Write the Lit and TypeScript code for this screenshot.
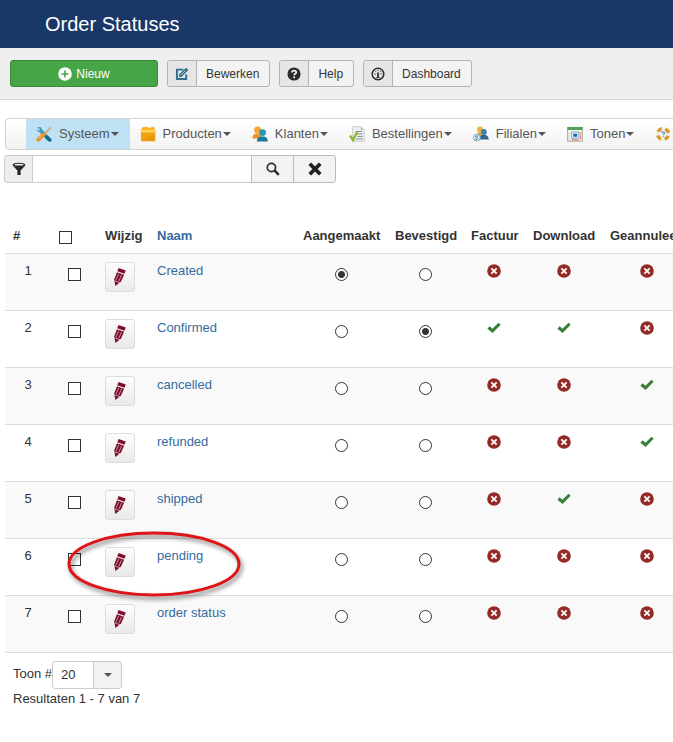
import { LitElement, html, svg, css, nothing } from "lit";
import { customElement, state } from "lit/decorators.js";

const glyph = (body: unknown, cls = "", box = "0 0 16 16") =>
  html`<svg class="icon ${cls}" viewBox=${box} aria-hidden="true">${body}</svg>`;

const plusCircle = svg`<circle cx="8" cy="8" r="7.8" fill="#fff"/><path d="M8 4v8M4 8h8" stroke="#46a546" stroke-width="1.8"/>`;
const editIcon = svg`<path d="M9.5 3H2.2v10.8h10.6V8.5" fill="none" stroke="#2f6f8f" stroke-width="2.2"/><path d="M5 8.4L12.6.8l2.7 2.7-7.6 7.6-3.4.7z" fill="#2f6f8f"/><path d="M6.4 9.6l5.4-5.4" stroke="#e6e6e6" stroke-width=".8"/>`;
const helpIcon = svg`<circle cx="8" cy="8" r="7.5" fill="#2b2b2b"/><path d="M5.6 6.3C5.6 3.4 10.6 3.3 10.6 6c0 1.8-2.4 1.7-2.4 3.4" fill="none" stroke="#eee" stroke-width="2"/><circle cx="8.2" cy="11.8" r="1.2" fill="#eee"/>`;
const dashIcon = svg`<circle cx="8" cy="8" r="6.6" fill="none" stroke="#2b2b2b" stroke-width="1.7"/><path d="M8 6.2v6" stroke="#2b2b2b" stroke-width="2"/><path d="M3.8 8h1.6M10.6 8h1.6M5 4.8l1 1M11 4.8l-1 1M8 3.2v1.4M6 12h4" stroke="#2b2b2b" stroke-width="1"/>`;
const filterIcon = svg`<ellipse cx="8" cy="3.4" rx="7.2" ry="2.6" fill="#222"/><ellipse cx="8" cy="3" rx="5.2" ry="1" fill="#eee"/><path d="M1 4.4l5.2 5.4v5h3.6v-5L15 4.4q-7 3.2-14 0z" fill="#222"/>`;
const searchIcon = svg`<circle cx="6.2" cy="6.2" r="4.7" fill="none" stroke="#2b2b2b" stroke-width="2"/><path d="M9.6 9.6l5 5" stroke="#2b2b2b" stroke-width="2.8"/>`;
const clearIcon = svg`<path d="M2 2l12 12M14 2L2 14" stroke="#222" stroke-width="4.4"/>`;
const cancelIcon = svg`<circle cx="8" cy="8" r="7.8" fill="#942a25"/><path d="M5 5l6 6M11 5l-6 6" stroke="#fff" stroke-width="2.1"/>`;
const okIcon = svg`<path d="M.4 8.8L3 6l3.2 2.8L13.2 2l2.4 2.4-9.2 9.2z" fill="#378137"/>`;
const pencilIcon = svg`<path d="M8.4 0l8 2.8-1.4 3.6L7 3.6z" fill="#7b0f2b"/><path d="M6.6 4.6l8 2.8-3.6 8L4.8 20 3.6 12.6z" fill="#7b0f2b"/><path d="M8.6 6.4l-3.1 7M11.8 7.6l-3.1 7" stroke="#dcc4ca" stroke-width=".8"/><path d="M4 14.2l6 2.2" stroke="#eee" stroke-width=".7"/>`;

const toolsIcon = svg`<path d="M2 1l3 .2 1.2 2.4L14 12l1.4 2-2 1.6-2.2-1.2L3.6 6.2 1 5z" fill="#3d9cc0"/><path d="M1.4 2.4l2.2 1.8" stroke="#bfe3f3" stroke-width="1.6"/><path d="M10.8 11l3 3" stroke="#17698c" stroke-width="3.4" stroke-linecap="round"/><path d="M14.8 1.4l-7 7.4" stroke="#c9aa75" stroke-width="1.8"/><path d="M7.6 8.4L2.4 13.6" stroke="#ef8b24" stroke-width="3.8" stroke-linecap="round"/><path d="M6.8 8.4L2.2 13" stroke="#fbc36c" stroke-width="1"/>`;
const boxIcon = svg`<path d="M1 4l1.8-3 5 0 1 1L14 .6 15 4z" fill="#f8b41e"/><path d="M.8 4.4h14.6v10.8H1z" fill="#f2a312"/><path d="M.8 4h14.6v2.4H.8z" fill="#ffd65b"/><path d="M2 14l12-6v7H2z" fill="#e98d08" opacity=".6"/>`;
const peopleIcon = svg`<circle cx="5.6" cy="4" r="3.6" fill="#f6a830"/><path d="M.4 12.4q0-4.6 4-5h2.4q2.4.6 2.6 5z" fill="#ee9420"/><circle cx="10.6" cy="6.6" r="3.4" fill="#2b95b5"/><path d="M4.8 15.6q0-4.6 4-5.2h3.6q3.4.8 3.4 5.2z" fill="#1a7c9c"/>`;
const orderIcon = svg`<path d="M3.4.6h8.4l3.6 3.4v11.4h-12z" fill="#eceef0" stroke="#c1c6ca" stroke-width=".8"/><path d="M11.6.8V4h3.6z" fill="#b9c0c5"/><path d="M7 5.5h6M7.6 8h6M8.4 10.5h5M7 13h7" stroke="#8b949b" stroke-width="1"/><path d="M.8 9.4l3.2 4.8L8.2 5.6" fill="none" stroke="#8fbc2c" stroke-width="2.4"/>`;
const affiliateIcon = svg`<circle cx="7" cy="3.4" r="3" fill="#edb33d"/><path d="M3.8 10q.4-3.6 3.2-4l3 4z" fill="#e2a12c"/><circle cx="10.8" cy="6" r="3" fill="#3f7fae"/><path d="M6 13.6q.4-4.4 4-4.8h2q3.4.8 3.8 4.8z" fill="#2c6796"/><circle cx="3.8" cy="11.6" r="3.4" fill="#eaf4fa" stroke="#74a7c7"/><path d="M5 10.2q-2.2-.8-2.4.4t1.6 1q1.2.8 0 1.6t-1.8-.2" fill="none" stroke="#2d6688" stroke-width=".9"/>`;
const displayIcon = svg`<path d="M.6 1.4h14.8v13.8H.6z" fill="#f4f1ee" stroke="#a9a9a9"/><path d="M.4 1h15.2v3H.4z" fill="#55a05c"/><path d="M2 6v8" stroke="#ddd" stroke-width="1.2"/><path d="M4.6 6h7.2v6.2H4.6z" fill="#fff" stroke="#74a3cc"/><path d="M6.2 7.6h4v3.2h-4z" fill="#1b69b0"/><path d="M13.6 6v3.4" stroke="#e7a94c" stroke-width="1.4"/><path d="M13.6 9.8v3.8M4.6 13.8h7" stroke="#e08080" stroke-width="1.2"/>`;
const lifebuoyIcon = svg`<circle cx="8" cy="8" r="5.4" fill="none" stroke="#f1ece0" stroke-width="3.4"/><circle cx="8" cy="8" r="5.4" fill="none" stroke="#d99a2e" stroke-width="3.6" stroke-dasharray="4.6 3.88" stroke-dashoffset="-1.9"/><path d="M6.6 6.8q1.4-1.6 2.6-.4t-1 2v.8" fill="none" stroke="#4b8ec0" stroke-width="1.1"/><circle cx="8.2" cy="10.6" r=".6" fill="#4b8ec0"/>`;

interface Status {
  name: string;
  flags: [boolean, boolean, boolean];
  marked?: boolean;
}

const STATUSES: Status[] = [
  { name: "Created", flags: [false, false, false] },
  { name: "Confirmed", flags: [true, true, false] },
  { name: "cancelled", flags: [false, false, true] },
  { name: "refunded", flags: [false, false, true] },
  { name: "shipped", flags: [false, true, false] },
  { name: "pending", flags: [false, false, false], marked: true },
  { name: "order status", flags: [false, false, false] },
];

const MENU = [
  { label: "Systeem", icon: toolsIcon, active: true },
  { label: "Producten", icon: boxIcon },
  { label: "Klanten", icon: peopleIcon },
  { label: "Bestellingen", icon: orderIcon },
  { label: "Filialen", icon: affiliateIcon },
  { label: "Tonen", icon: displayIcon },
];

const FLAG_NAMES = ["Factuur", "Download", "Geannuleerd"];

@customElement("app-root")
export class AppRoot extends LitElement {
  @state() private created = 0;
  @state() private confirmed = 1;

  static styles = css`
    :host {
      display: block;
      overflow-x: hidden;
      background: #fff;
      color: #333;
      font: 13px/18px "Liberation Sans", Arial, sans-serif;
    }
    * { box-sizing: border-box; }
    a { color: #376b9e; text-decoration: none; }
    button, input, select { font: inherit; color: inherit; margin: 0; }
    button { cursor: pointer; padding: 0; }
    .icon { display: block; flex: none; width: 16px; height: 16px; }
    .small { width: 14px; height: 14px; }
    .title-bar { background: #1a3867; padding: 0 45px; }
    h1 { margin: 0; color: #fff; font-size: 20px; font-weight: 400; line-height: 48px; }
    .toolbar {
      display: flex;
      gap: 9px;
      padding: 12px 10px;
      background: #efefef;
      border-bottom: 1px solid #d8d8d8;
      font-size: 12px;
    }
    .tool {
      display: flex;
      align-items: stretch;
      height: 27px;
      border: 1px solid #b3b3b3;
      border-radius: 3px;
      background: #f3f3f3;
      overflow: hidden;
    }
    .tool-icon {
      display: flex;
      align-items: center;
      justify-content: center;
      width: 29px;
      background: #e6e6e6;
      border-right: 1px solid #b3b3b3;
    }
    .tool-label { align-self: center; padding: 0 10px 0 9px; }
    .new {
      width: 148px;
      align-items: center;
      justify-content: center;
      gap: 4px;
      background: #46a546;
      border-color: #3a873a;
      color: #fff;
    }
    .menu {
      display: flex;
      height: 32px;
      margin: 18px 0 0 5px;
      padding-left: 20px;
      border: 1px solid #d4d4d4;
      border-right: 0;
      border-radius: 4px 0 0 4px;
      background: linear-gradient(#fff, #f2f2f2);
    }
    .menu a {
      display: flex;
      align-items: center;
      flex: none;
      padding: 0 11px 0 10px;
      color: #555;
    }
    .menu .icon { margin-right: 7px; }
    .menu .active { background: #bfe1f3; }
    .caret {
      margin-left: 1px;
      border: 4px solid transparent;
      border-top-color: #555;
      border-bottom: 0;
    }
    .filter { display: flex; height: 28px; margin: 5px 4px 0; }
    .filter > * { border: 1px solid #ccc; }
    .filter > * + * { margin-left: -1px; }
    .filter label {
      display: flex;
      align-items: center;
      justify-content: center;
      width: 29px;
      background: #eee;
      border-radius: 3px 0 0 3px;
    }
    .filter input { width: 220px; padding: 0 6px; background: #fff; border-radius: 0; }
    .filter button {
      display: flex;
      align-items: center;
      justify-content: center;
      width: 43px;
      border-color: #bbb;
      background: #f3f3f3;
    }
    .filter button:last-child { border-radius: 0 3px 3px 0; }
    .list { margin: 36px 0 0 5px; overflow: hidden; }
    table {
      width: 100%;
      min-width: 687px;
      table-layout: fixed;
      border-collapse: collapse;
    }
    th, td { padding: 8px 8px 0; text-align: left; vertical-align: top; }
    th { height: 34px; font-weight: 700; white-space: nowrap; }
    td { height: 57px; border-top: 1px solid #ddd; }
    tbody { border-bottom: 1px solid #ddd; }
    tbody tr:nth-child(odd) { background: #f9f9f9; }
    .c-num, .c-check { width: 46px; }
    .c-edit { width: 52px; }
    .c-created { width: 92px; }
    .c-confirmed { width: 76px; }
    .c-invoice { width: 62px; }
    .c-download { width: 77px; }
    .c-cancelled { width: 90px; }
    .mid { text-align: center; }
    td.check { padding: 14px 8px 0 17px; }
    th.check { padding-top: 12px; }
    td.pick { padding-top: 14px; }
    td.pick input { margin: 0 auto; }
    td .small { margin: 2px auto 0; }
    input[type="checkbox"], input[type="radio"] {
      appearance: none;
      display: block;
      width: 13px;
      height: 13px;
      border: 1px solid #333;
      background: #fff;
    }
    input[type="radio"] { border-radius: 50%; }
    input[type="radio"]:checked { background: radial-gradient(circle, #333 0 3px, #fff 4px); }
    input[type="checkbox"]:checked { background: #333; box-shadow: inset 0 0 0 2px #fff; }
    .edit {
      display: flex;
      align-items: center;
      justify-content: center;
      width: 30px;
      height: 30px;
      border: 1px solid #ddd;
      border-radius: 3px;
      background: linear-gradient(#fdfdfd, #e9e9e9);
    }
    .pencil { width: 18px; height: 20px; }
    .name { position: relative; }
    .ring {
      position: absolute;
      top: -12px;
      left: -88px;
      width: 190px;
      height: 84px;
      pointer-events: none;
      filter: drop-shadow(2px 3px 2px rgba(0, 0, 0, 0.5));
    }
    .pager { padding: 8px 13px 32px; }
    .pager-row { display: flex; align-items: flex-start; }
    .pager-row label { padding-top: 4px; }
    .picker { position: relative; }
    .picker select {
      appearance: none;
      display: block;
      width: 70px;
      height: 28px;
      padding: 0 8px;
      border: 1px solid #ccc;
      border-radius: 3px;
      background: linear-gradient(to right, #fff 40px, #ccc 40px 41px, #f2f2f2 41px);
    }
    .picker .caret {
      position: absolute;
      top: 12px;
      right: 10px;
      pointer-events: none;
    }
    .results { margin: 1px 0 0; }
  `;

  private renderRow(s: Status, i: number) {
    return html`<tr>
      <td class="mid">${i + 1}</td>
      <td class="check"><input type="checkbox" aria-label="Selecteer ${s.name}" /></td>
      <td>
        <button class="edit" aria-label="Wijzig ${s.name}">${glyph(pencilIcon, "pencil", "0 0 20 20")}</button>
      </td>
      <td class="name">
        <a href="#">${s.name}</a>
        ${s.marked
          ? html`<svg class="ring" viewBox="0 0 190 84" aria-hidden="true">
              <ellipse cx="93" cy="37" rx="85" ry="31" fill="none" stroke="#dd1518" stroke-width="3" />
            </svg>`
          : nothing}
      </td>
      <td class="pick">
        <input type="radio" name="created" aria-label="Aangemaakt: ${s.name}"
          .checked=${this.created === i} @change=${() => (this.created = i)} />
      </td>
      <td class="pick">
        <input type="radio" name="confirmed" aria-label="Bevestigd: ${s.name}"
          .checked=${this.confirmed === i} @change=${() => (this.confirmed = i)} />
      </td>
      ${s.flags.map((on) => html`<td>${glyph(on ? okIcon : cancelIcon, "small")}</td>`)}
    </tr>`;
  }

  render() {
    return html`
      <header class="title-bar"><h1>Order Statuses</h1></header>
      <div class="toolbar">
        <button class="tool new">${glyph(plusCircle, "small")}Nieuw</button>
        ${[
          ["Bewerken", editIcon],
          ["Help", helpIcon],
          ["Dashboard", dashIcon],
        ].map(
          ([label, icon]) => html`<button class="tool">
            <span class="tool-icon">${glyph(icon, "small")}</span>
            <span class="tool-label">${label}</span>
          </button>`
        )}
      </div>
      <nav class="menu">
        ${MENU.map(
          (m) => html`<a href="#" class=${m.active ? "active" : ""}>${glyph(m.icon)}${m.label}<span class="caret"></span></a>`
        )}
        <a href="#" aria-label="Help">${glyph(lifebuoyIcon)}</a>
      </nav>
      <form class="filter" @submit=${(e: Event) => e.preventDefault()}>
        <label for="filter" aria-label="Filter">${glyph(filterIcon, "small")}</label>
        <input id="filter" type="text" />
        <button type="submit" aria-label="Zoeken">${glyph(searchIcon, "small")}</button>
        <button type="reset" aria-label="Wissen">${glyph(clearIcon, "small")}</button>
      </form>
      <main>
        <div class="list">
          <table>
            <colgroup>
              <col class="c-num" /><col class="c-check" /><col class="c-edit" /><col />
              <col class="c-created" /><col class="c-confirmed" /><col class="c-invoice" />
              <col class="c-download" /><col class="c-cancelled" />
            </colgroup>
            <thead>
              <tr>
                <th>#</th>
                <th class="check"><input type="checkbox" aria-label="Selecteer alles" /></th>
                <th>Wijzig</th>
                <th><a href="#">Naam</a></th>
                <th class="mid">Aangemaakt</th>
                <th class="mid">Bevestigd</th>
                ${FLAG_NAMES.map((n) => html`<th class="mid">${n}</th>`)}
              </tr>
            </thead>
            <tbody>
              ${STATUSES.map((s, i) => this.renderRow(s, i))}
            </tbody>
          </table>
        </div>
        <div class="pager">
          <div class="pager-row">
            <label for="limit">Toon #</label>
            <span class="picker">
              <select id="limit">
                <option>20</option>
                <option>50</option>
                <option>100</option>
              </select>
              <span class="caret"></span>
            </span>
          </div>
          <p class="results">Resultaten 1 - 7 van 7</p>
        </div>
      </main>
    `;
  }
}
